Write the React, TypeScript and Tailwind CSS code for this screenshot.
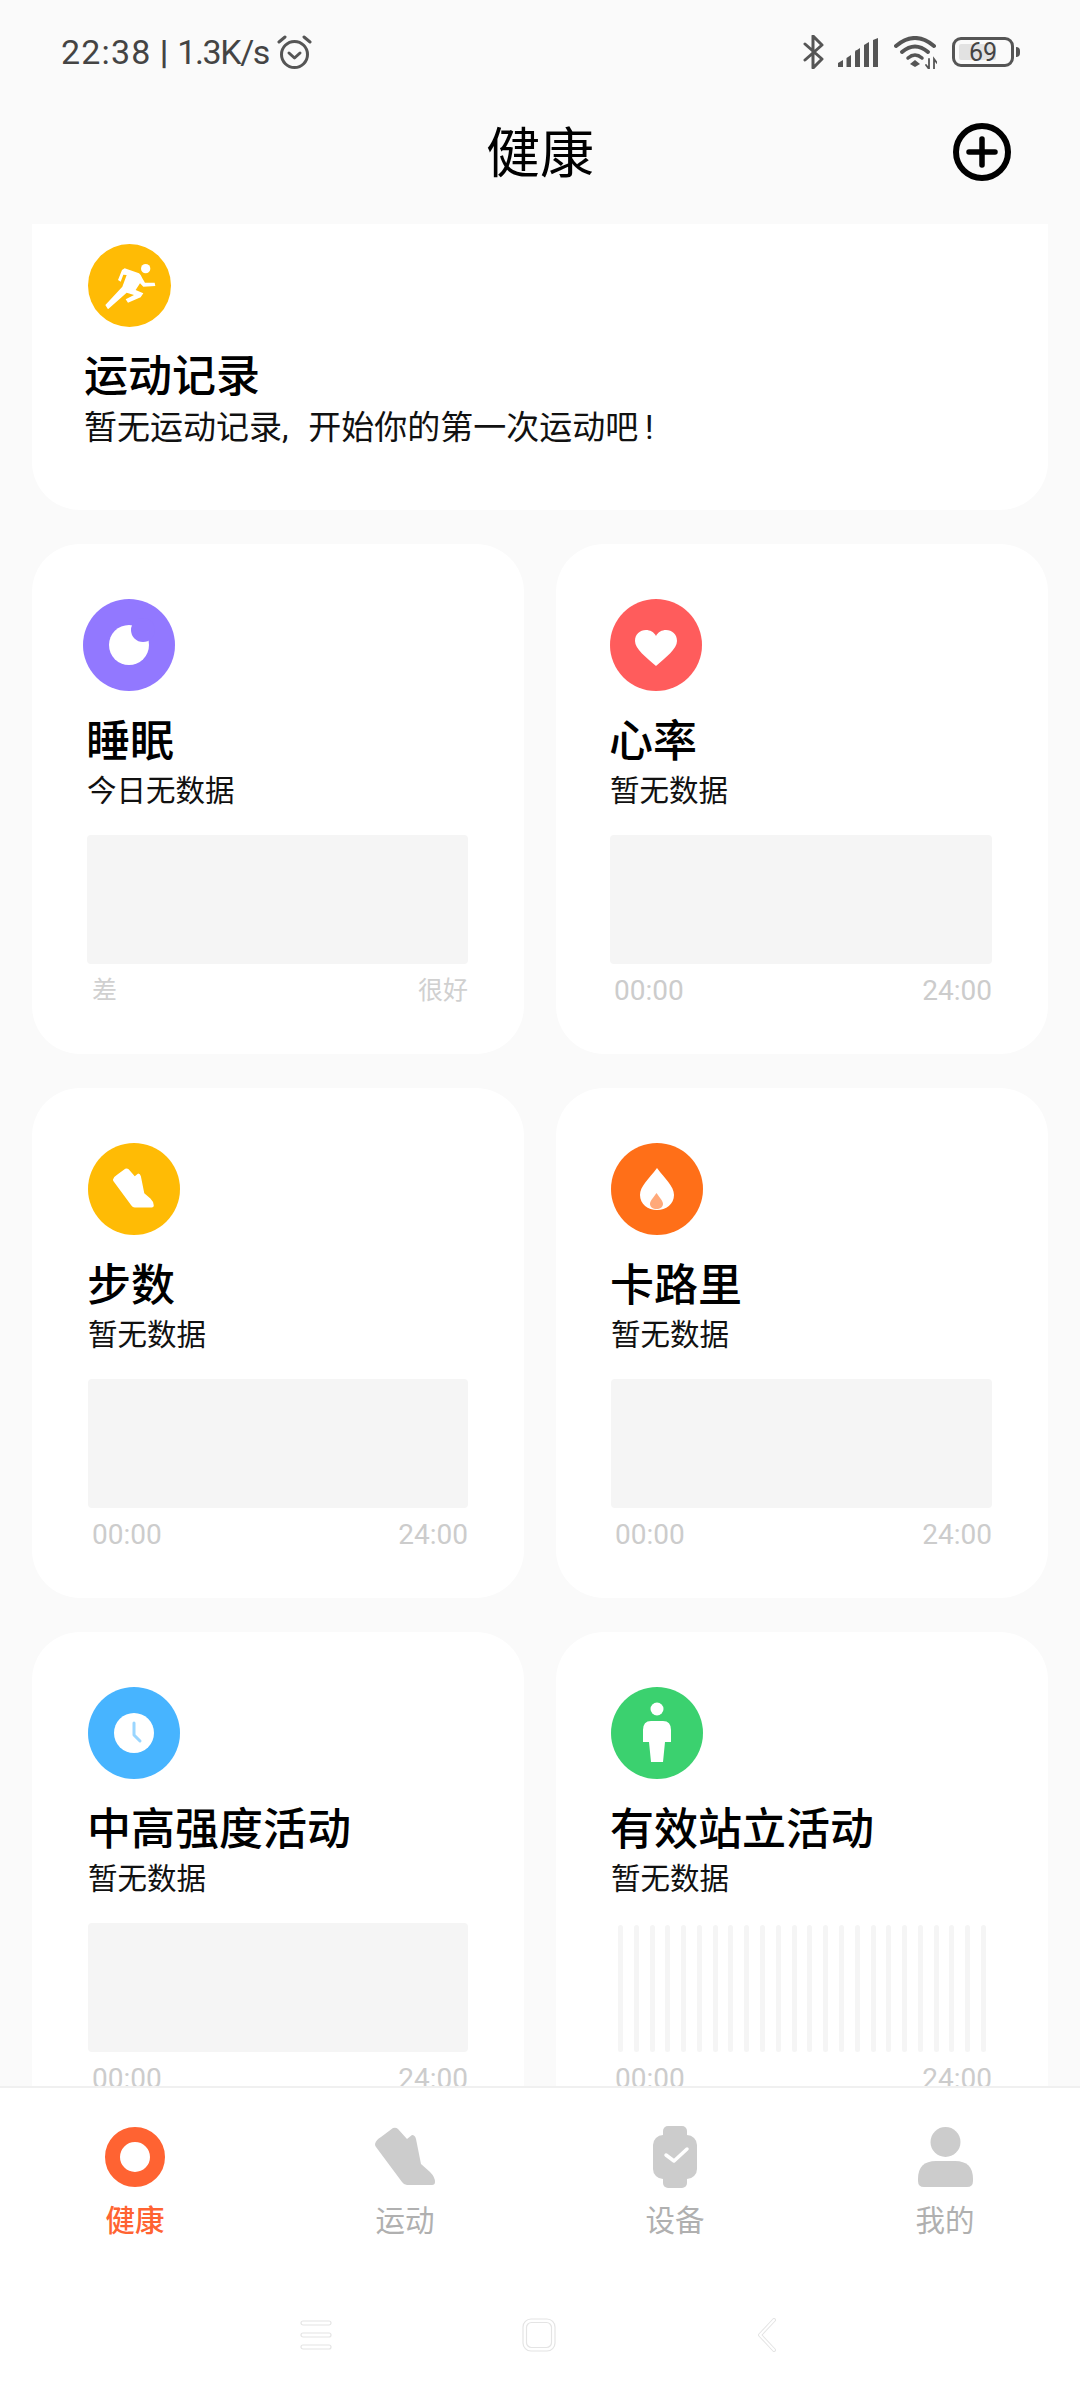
const shoePath =
  'M0 17 Q1 13 6 10 L18 1 Q21 0 23 2 L32 12 L37 8 Q40 8 41 12 L46 37 L55 45 Q60 50 60 55 Q60 58 57 58 L32 58 Q29 58 27 55 L1 20 Q0 19 0 17Z'

function RunIcon() {
  return (
    <svg width="83" height="83" viewBox="12 12 249 249" className="ml-[4px] block">
      <circle cx="136.5" cy="136.5" r="124.5" fill="#ffbb05" />
      <circle cx="185" cy="86" r="14" fill="#fff" />
      <path
        d="M122 85 L165 100 Q172 105 175 115 L183 128 L212 128 L214 138 L178 140 L168 130 L155 150 L178 160 L170 172 L132 188 L125 178 L150 165 L128 158 L72 208 L64 195 L115 140 L128 105 L118 104 L110 125 L102 120 L114 90Z"
        fill="#fff"
      />
    </svg>
  )
}

function SleepIcon() {
  return (
    <svg width="92" height="92" viewBox="0 0 92 92" className="block">
      <circle cx="46" cy="46" r="46" fill="#9278ff" />
      <circle cx="46" cy="46" r="20" fill="#fff" />
      <circle cx="60" cy="31" r="12" fill="#9278ff" />
    </svg>
  )
}

function HeartIcon() {
  return (
    <svg width="92" height="92" viewBox="0 0 92 92" className="block">
      <circle cx="46" cy="46" r="46" fill="#ff5c5c" />
      <path d="M46 67 C36 58 25 50 25 42 C25 35 30 31 36 31 C40 31 44 33 46 37 C48 33 52 31 56 31 C62 31 67 35 67 42 C67 50 56 58 46 67Z" fill="#fff" />
    </svg>
  )
}

function StepsIcon() {
  return (
    <svg width="92" height="92" viewBox="0 0 92 92" className="block">
      <circle cx="46" cy="46" r="46" fill="#ffbb05" />
      <path d={shoePath} fill="#fff" transform="translate(25 25) scale(0.68)" />
    </svg>
  )
}

function FlameIcon() {
  return (
    <svg width="92" height="92" viewBox="0 0 92 92" className="block">
      <circle cx="46" cy="46" r="46" fill="#ff6f18" />
      <path d="M46 25 C38 36 29 43 29 52 C29 61 37 67 46 67 C55 67 63 61 63 52 C63 43 54 36 46 25Z" fill="#fff" />
      <path d="M45.5 50 C42 55 39 58 39 61 C39 64 42 66 45.5 66 C49 66 52 64 52 61 C52 58 49 55 45.5 50Z" fill="#ffa97a" />
    </svg>
  )
}

function ClockIcon() {
  return (
    <svg width="92" height="92" viewBox="0 0 92 92" className="block">
      <circle cx="46" cy="46" r="46" fill="#47b4ff" />
      <circle cx="46" cy="46" r="20" fill="#fff" />
      <path d="M46 36 V48 L52 54" fill="none" stroke="#9ad6ff" strokeWidth="3" strokeLinecap="round" strokeLinejoin="round" />
    </svg>
  )
}

function StandIcon() {
  return (
    <svg width="92" height="92" viewBox="0 0 92 92" className="block">
      <circle cx="46" cy="46" r="46" fill="#3bd16f" />
      <circle cx="46" cy="22" r="6.5" fill="#fff" />
      <path d="M40 34 H52 Q60 34 60 43 V55 H54 L52 75 H40 L38 55 H32 V43 Q32 34 40 34Z" fill="#fff" />
    </svg>
  )
}

interface CardProps {
  icon: React.ReactNode
  title: string
  sub: string
  bars?: boolean
  sleep?: boolean
  pad: string
}

function MetricCard({ icon, title, sub, bars, sleep, pad }: CardProps) {
  return (
    <div className={`h-[510px] rounded-[48px] bg-white pt-[55px] pr-[56px] ${pad}`}>
      {icon}
      <div className="mt-[26px] -ml-[1px] text-[44px] leading-[50px] font-medium text-black">{title}</div>
      <div className="mt-[4px] text-[29.5px] leading-[40px] text-[#111]">{sub}</div>
      {bars ? (
        <div className="mt-[24px] flex h-[129px] justify-between pt-[2px] pr-[6px] pl-[7px]">
          {Array.from({ length: 24 }).map((_, i) => (
            <div key={i} className="h-full w-[5px] rounded-full bg-[#f5f5f5]" />
          ))}
        </div>
      ) : (
        <div className="mt-[24px] h-[129px] rounded-[4px] bg-[#f5f5f5]" />
      )}
      {sleep ? (
        <div className="mt-[10px] flex justify-between pl-[5px] text-[25px] leading-[34px] text-[#d0d0d0]">
          <span>差</span>
          <span>很好</span>
        </div>
      ) : (
        <div className="mt-[10px] flex justify-between pl-[4px] text-[28px] leading-[34px] text-[#cccccc]">
          <span>00:00</span>
          <span>24:00</span>
        </div>
      )}
    </div>
  )
}

function StatusBar() {
  return (
    <div className="flex h-[92px] items-center justify-between pt-[12px] pr-[60px] pl-[61px] text-[#444]">
      <div className="flex items-center">
        <span className="text-[34px] leading-[40px] tracking-[1.2px]">22:38</span>
        <span className="ml-[8px] text-[34px] leading-[40px] font-bold">|</span>
        <span className="ml-[9px] text-[34px] leading-[40px] tracking-[-1.4px]">1.3K/s</span>
        <svg width="35" height="34" viewBox="0 0 35 34" className="ml-[8px]" fill="none" stroke="#555" strokeWidth="3" strokeLinecap="round" strokeLinejoin="round">
          <circle cx="17.5" cy="19.5" r="13" />
          <path d="M12 18 L17.5 23 L23 18" />
          <path d="M2 7 L8 2 M33 7 L27 2" />
        </svg>
      </div>
      <div className="flex items-center">
        <svg width="21" height="34" viewBox="0 0 21 34" fill="none" stroke="#555" strokeWidth="3" strokeLinecap="round" strokeLinejoin="round">
          <path d="M2 9 L19 24 L10 33 V1 L19 10 L2 25" />
        </svg>
        <svg width="40" height="29" viewBox="0 0 40 29" className="ml-[14px]" fill="#555">
          <path d="M0 29 V25 L5 22 V29Z" />
          <path d="M8.5 29 V20 L13 17 V29Z" />
          <path d="M17 29 V14 Q17 12 19 12 L22 10 V29Z" />
          <path d="M26 29 V7 L31 4 V29Z" />
          <path d="M35 29 V2 L40 0 V29Z" />
        </svg>
        <svg width="43" height="33" viewBox="0 0 43 33" className="ml-[16px]" fill="none" stroke="#555" strokeLinecap="round">
          <path d="M2 10 Q21 -6 40 10" strokeWidth="4" />
          <path d="M8 16 Q21 5 34 16" strokeWidth="4" />
          <path d="M14 22 Q21 16 28 22" strokeWidth="3.5" />
          <path d="M21 24 L26 28 L21 31 L16 28Z" fill="#555" stroke="none" />
          <path d="M35 23 V33 M32 29 L35 33 M40 33 V23 L43 27" strokeWidth="1.8" />
        </svg>
        <div className="relative ml-[15px] flex h-[30px] w-[62px] items-center justify-center rounded-[9px] border-[3px] border-[#555]">
          <div className="absolute top-[4px] bottom-[4px] left-[4px] w-[37px] rounded-[2px] bg-[#e2e2e2]" />
          <span className="relative text-[25px] leading-none text-[#444]">69</span>
        </div>
        <div className="ml-[2px] h-[10px] w-[4px] rounded-r-full bg-[#555]" />
      </div>
    </div>
  )
}

function Header() {
  return (
    <div className="grid h-[132px] grid-cols-[1fr_auto_1fr] items-center px-[69px] pb-[12px]">
      <div />
      <div className="pt-[6px] text-[54px] leading-[70px] text-black">健康</div>
      <svg width="58" height="58" viewBox="0 0 58 58" className="justify-self-end" fill="none" stroke="#000" strokeLinecap="round">
        <circle cx="29" cy="29" r="26" strokeWidth="6" />
        <path d="M16 29 H42 M29 16 V42" strokeWidth="5.5" />
      </svg>
    </div>
  )
}

function BottomNav() {
  return (
    <div className="h-[314px] border-t-2 border-[#f0f0f0] bg-white">
      <div className="grid grid-cols-4 pt-[38px]">
        <div className="flex flex-col items-center">
          <div className="flex h-[62px] items-center">
            <div className="h-[60px] w-[60px] rounded-full border-[15px] border-[#ff6332] bg-white" />
          </div>
          <div className="mt-[16px] text-[29.5px] leading-[34px] font-medium text-[#ff6332]">健康</div>
        </div>
        <div className="flex flex-col items-center">
          <svg width="60" height="62" viewBox="0 0 60 60" fill="#cccccc">
            <path d={shoePath} />
          </svg>
          <div className="mt-[16px] text-[29.5px] leading-[34px] text-[#b0b0b0]">运动</div>
        </div>
        <div className="flex flex-col items-center">
          <svg width="44" height="62" viewBox="0 0 44 62">
            <rect x="0" y="9" width="44" height="44" rx="10" fill="#cccccc" />
            <rect x="10" y="0" width="24" height="62" rx="5" fill="#cccccc" />
            <path d="M13 29 L21 35 L34 23" fill="none" stroke="#fff" strokeWidth="3.5" strokeLinecap="round" strokeLinejoin="round" />
          </svg>
          <div className="mt-[16px] text-[29.5px] leading-[34px] text-[#b0b0b0]">设备</div>
        </div>
        <div className="flex flex-col items-center">
          <svg width="55" height="62" viewBox="0 0 55 62" fill="#cccccc">
            <circle cx="27.5" cy="16" r="15" />
            <path d="M0 55 V53 Q0 35 18 35 H37 Q55 35 55 53 V55 Q55 61 49 61 H6 Q0 61 0 55Z" />
          </svg>
          <div className="mt-[16px] text-[29.5px] leading-[34px] text-[#b0b0b0]">我的</div>
        </div>
      </div>
      <div className="mt-[80px] flex items-center justify-center pr-[3px]">
        <svg width="32" height="30" viewBox="0 0 32 30" fill="none" stroke="#e4e4e4" strokeWidth="1.2">
          <rect x="1" y="1" width="30" height="4" rx="2" />
          <rect x="1" y="13" width="30" height="4" rx="2" />
          <rect x="1" y="25" width="30" height="4" rx="2" />
        </svg>
        <svg width="34" height="34" viewBox="0 0 34 34" className="ml-[190px]" fill="none" stroke="#e4e4e4" strokeWidth="1.2">
          <rect x="1" y="1" width="32" height="32" rx="8" />
          <rect x="4.5" y="4.5" width="25" height="25" rx="5" />
        </svg>
        <svg width="20" height="34" viewBox="0 0 20 34" className="ml-[201px]" fill="none" strokeLinecap="round" strokeLinejoin="round">
          <path d="M17 2 L3 17 L17 32" stroke="#e4e4e4" strokeWidth="4" />
          <path d="M17 2 L3 17 L17 32" stroke="#fff" strokeWidth="2" />
        </svg>
      </div>
    </div>
  )
}

export default function App() {
  return (
    <div className="flex h-[2400px] w-[1080px] flex-col overflow-hidden bg-[#fafafa] font-['Roboto','Noto_Sans_CJK_SC',sans-serif]">
      <StatusBar />
      <Header />
      <div className="flex-1 overflow-hidden px-[32px]">
        <div className="rounded-b-[48px] bg-white pt-[20px] pb-[62px] pl-[52px]">
          <RunIcon />
          <div className="mt-[25px] text-[44px] leading-[50px] font-medium text-black">运动记录</div>
          <div className="mt-[6px] text-[33px] leading-[40px] whitespace-pre text-[#111]">{'暂无运动记录,  \u200A开始你的第一次运动吧\u2009!'}</div>
        </div>
        <div className="mt-[34px] grid grid-cols-2 gap-x-[32px] gap-y-[34px]">
          <MetricCard icon={<div className="-ml-[4px]"><SleepIcon /></div>} title="睡眠" sub="今日无数据" sleep pad="pl-[55px]" />
          <MetricCard icon={<HeartIcon />} title="心率" sub="暂无数据" pad="pl-[54px]" />
          <MetricCard icon={<StepsIcon />} title="步数" sub="暂无数据" pad="pl-[56px]" />
          <MetricCard icon={<FlameIcon />} title="卡路里" sub="暂无数据" pad="pl-[55px]" />
          <MetricCard icon={<ClockIcon />} title="中高强度活动" sub="暂无数据" pad="pl-[56px]" />
          <MetricCard icon={<StandIcon />} title="有效站立活动" sub="暂无数据" bars pad="pl-[55px]" />
        </div>
      </div>
      <BottomNav />
    </div>
  )
}
